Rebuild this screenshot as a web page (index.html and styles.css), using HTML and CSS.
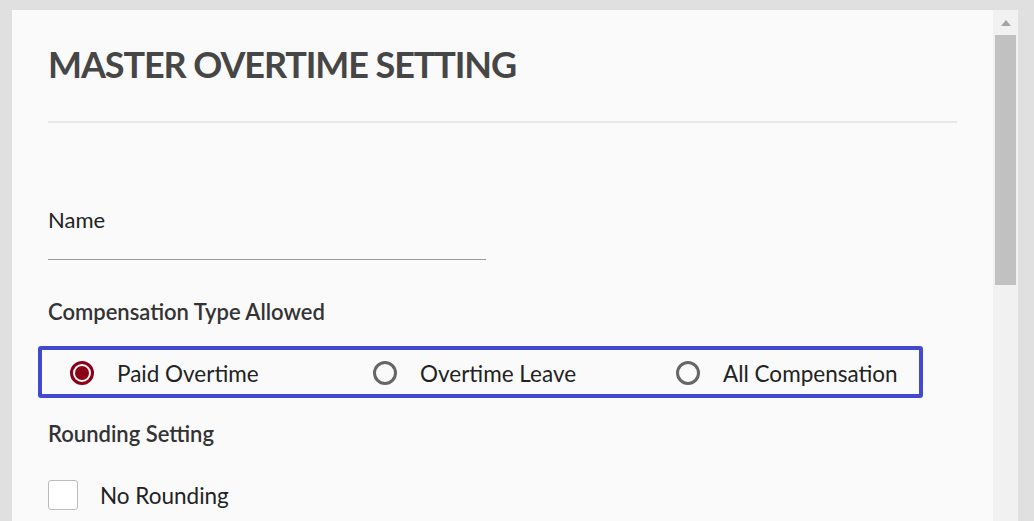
FILE: index.html
```html
<!DOCTYPE html>
<html>
<head>
<meta charset="utf-8">
<link rel="stylesheet" href="styles.css">
</head>
<body>
<div class="page">
  <div class="panel">
    <div class="content">
      <h1 class="title">MASTER OVERTIME SETTING</h1>
      <hr class="sep">
      <div class="field">
        <label class="field-label">Name</label>
        <div class="input"></div>
      </div>
      <div class="section-title">Compensation Type Allowed</div>
      <div class="radio-group">
        <div class="radio-item"><span class="radio checked"></span><span class="radio-label">Paid Overtime</span></div>
        <div class="radio-item"><span class="radio"></span><span class="radio-label">Overtime Leave</span></div>
        <div class="radio-item"><span class="radio"></span><span class="radio-label">All Compensation</span></div>
      </div>
      <div class="section-title rounding">Rounding Setting</div>
      <div class="check-item"><span class="checkbox"></span><span class="check-label">No Rounding</span></div>
    </div>
    <div class="scrollbar">
      <div class="arrow"></div>
      <div class="thumb"></div>
    </div>
  </div>
</div>
</body>
</html>
```
FILE: styles.css
```css
html, body {
  margin: 0;
  padding: 0;
  height: 100%;
  overflow: hidden;
}
body {
  background: #e0e0e0;
  font-family: Lato, "Open Sans", sans-serif;
  color: #222;
}
.page {
  padding: 10px 16px 0 12px;
  height: 100%;
  box-sizing: border-box;
}
.panel {
  display: flex;
  background: #fafafa;
  height: 100%;
}
.content {
  flex: 1;
  padding: 33px 36px 0 36px;
}
.title {
  margin: 0;
  font-size: 36px;
  line-height: 1.2;
  font-weight: 700;
  letter-spacing: -1.1px;
  color: #464646;
}
.sep {
  margin: 35px 0 0 0;
  border: 0;
  height: 2px;
  background: #e8e8e8;
}
.field {
  margin-top: 84px;
  width: 438px;
}
.field-label {
  display: block;
  font-size: 22px;
  line-height: 1.2;
  color: #222;
}
.input {
  height: 25px;
  border-bottom: 1px solid #9a9a9a;
}
.section-title {
  margin-top: 39px;
  font-size: 22px;
  line-height: 1.2;
  font-weight: 600;
  color: #333;
}
.radio-group {
  display: flex;
  align-items: center;
  margin: 21px 0 0 -10px;
  width: 885px;
  height: 52px;
  box-sizing: border-box;
  border: 4px solid #4349cf;
  border-radius: 3px;
  padding: 3px 0 0 28px;
}
.radio-item {
  display: flex;
  align-items: center;
  width: 303px;
  flex: none;
}
.radio {
  width: 24px;
  height: 24px;
  box-sizing: border-box;
  border: 3px solid #666;
  border-radius: 50%;
  flex: none;
  position: relative;
}
.radio.checked {
  border-color: #8b0016;
}
.radio.checked::after {
  content: "";
  position: absolute;
  left: 2px;
  top: 2px;
  width: 14px;
  height: 14px;
  border-radius: 50%;
  background: #8b0016;
}
.radio-label {
  margin-left: 23px;
  font-size: 22.5px;
  line-height: 1.2;
  color: #222;
}
.rounding {
  margin-top: 23px;
}
.check-item {
  display: flex;
  align-items: center;
  margin-top: 33px;
}
.checkbox {
  width: 30px;
  height: 30px;
  box-sizing: border-box;
  border: 1px solid #bbb;
  border-radius: 3px;
  background: #fff;
  flex: none;
}
.check-label {
  margin-left: 22px;
  font-size: 22.5px;
  line-height: 1.2;
  color: #222;
}
.scrollbar {
  width: 25px;
  flex: none;
  background: #f1f1f1;
  display: flex;
  flex-direction: column;
  align-items: center;
}
.arrow {
  margin-top: 10px;
  width: 0;
  height: 0;
  border-left: 5.5px solid transparent;
  border-right: 5.5px solid transparent;
  border-bottom: 6px solid #a3a3a3;
}
.thumb {
  margin-top: 9px;
  width: 21px;
  height: 250px;
  background: #c1c1c1;
}
```
